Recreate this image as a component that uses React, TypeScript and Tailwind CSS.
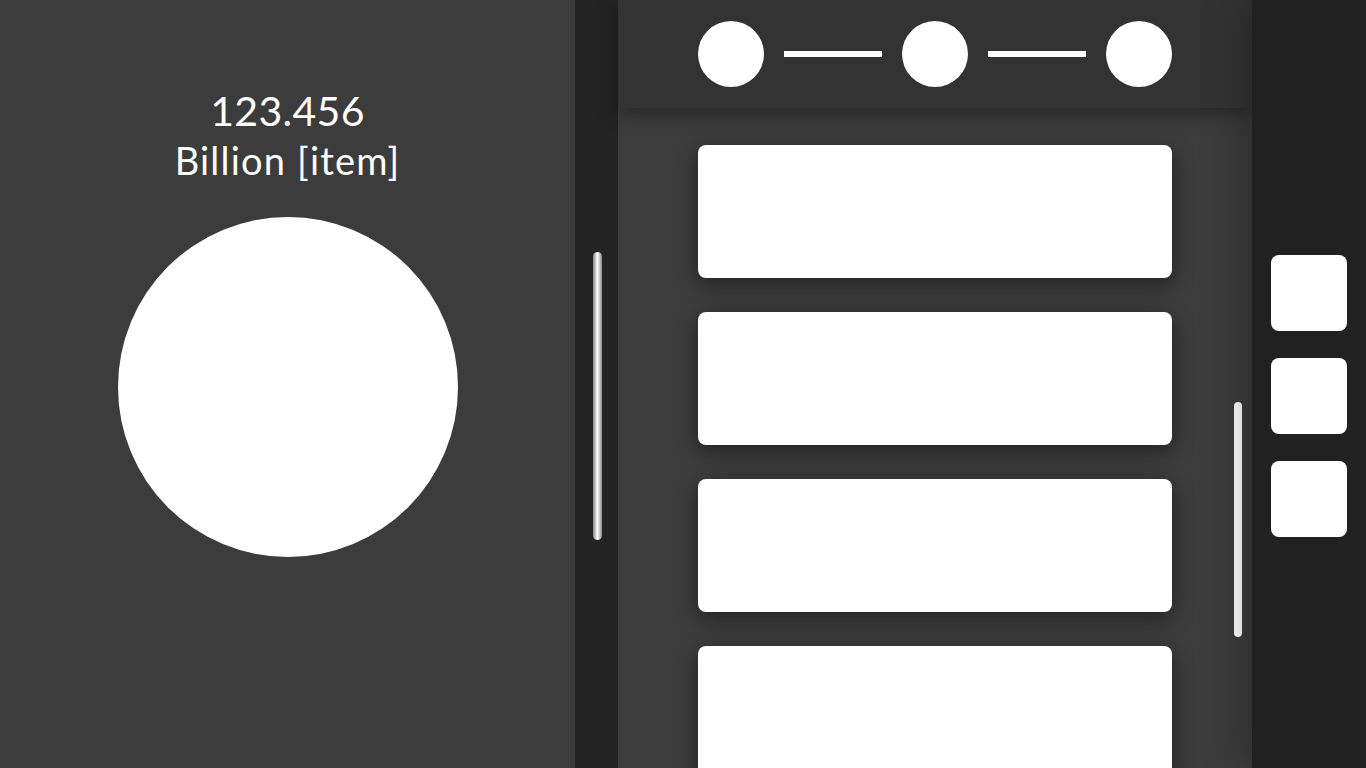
import React from 'react';

function StepDot() {
  return <div className="w-[66px] h-[66px] rounded-full bg-white shrink-0" />;
}

function StepLine() {
  return <div className="w-[98px] h-[6px] bg-white shrink-0" />;
}

export default function App() {
  const cards = [0, 1, 2, 3];
  const tiles = [0, 1, 2];
  return (
    <div
      className="w-[1366px] h-[768px] flex overflow-hidden bg-[#3c3c3c] text-white"
      style={{ fontFamily: 'Lato, "Noto Sans", sans-serif' }}
    >
      {/* summary panel */}
      <div className="w-[575px] shrink-0 bg-[#3c3c3c] flex flex-col items-center pt-[86px]">
        <p className="text-[41px] leading-[50px] tracking-[0.3px]">123.456</p>
        <p className="text-[38px] leading-[48px] tracking-[1.2px]">Billion [item]</p>
        <div className="mt-[33px] w-[340px] h-[340px] rounded-full bg-white" />
      </div>

      {/* splitter */}
      <div className="w-[43px] shrink-0 bg-[#232323] flex items-center justify-center">
        <div className="w-[9px] h-[288px] rounded-full bg-gradient-to-r from-[#8a8a8a] via-white to-[#8a8a8a] mt-[24px] ml-[2px]" />
      </div>

      {/* list panel */}
      <div className="w-[634px] shrink-0 flex flex-col relative">
        <div className="h-[108px] bg-[#333333] flex items-center justify-center gap-[20px] relative z-10 shadow-[0_6px_18px_rgba(0,0,0,0.35)]">
          <StepDot />
          <StepLine />
          <StepDot />
          <StepLine />
          <StepDot />
        </div>
        <div className="flex-1 bg-[#3c3c3c] flex flex-col items-center gap-[34px] pt-[37px] overflow-hidden">
          {cards.map((c) => (
            <div
              key={c}
              className="w-[474px] h-[133px] shrink-0 rounded-[8px] bg-white shadow-[0_6px_22px_rgba(0,0,0,0.45)]"
            />
          ))}
        </div>
        <div className="absolute right-[10px] top-[402px] w-[8px] h-[235px] rounded-full bg-white" />
      </div>

      {/* tool strip */}
      <div className="flex-1 bg-[#212121] relative z-20 shadow-[-10px_0_40px_rgba(0,0,0,0.25)] flex flex-col items-center justify-center gap-[27px] pt-[24px]">
        {tiles.map((t) => (
          <div key={t} className="w-[76px] h-[76px] rounded-[8px] bg-white" />
        ))}
      </div>
    </div>
  );
}
